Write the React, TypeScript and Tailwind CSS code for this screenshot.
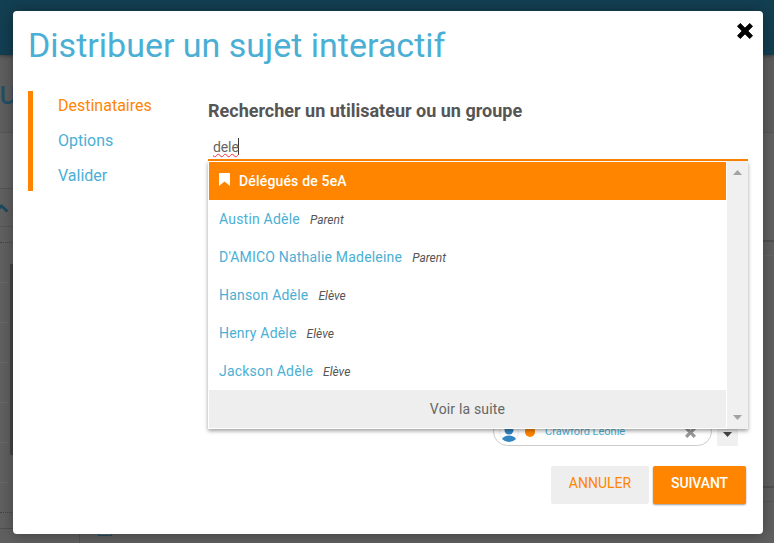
const people = [
  { name: 'Austin Adèle', role: 'Parent' },
  { name: "D'AMICO Nathalie Madeleine", role: 'Parent' },
  { name: 'Hanson Adèle', role: 'Elève' },
  { name: 'Henry Adèle', role: 'Elève' },
  { name: 'Jackson Adèle', role: 'Elève' },
];

const CROSS =
  'M3 0 L8 5 L13 0 L16 3 L11 8 L16 13 L13 16 L8 11 L3 16 L0 13 L5 8 L0 3 Z';

function Cross({ className }: { className: string }) {
  return (
    <svg viewBox="-0.5 -0.5 17 17" className={className} fill="currentColor" stroke="currentColor" strokeLinejoin="round">
      <path d={CROSS} />
    </svg>
  );
}

function Backdrop() {
  return (
    <div className="flex h-full flex-col bg-[#606060]">
      <div className="z-10 h-[55px] shrink-0 bg-[#133f52] shadow-[0_1px_4px_rgba(0,0,0,0.4)]" />
      <div className="flex h-[78px] shrink-0 border-b border-[#575757] bg-[#5e5e5e] pt-[15px]">
        <span className="-ml-[1px] text-[34px] leading-[44px] text-[#205068]">u</span>
      </div>
      <div className="flex min-h-0 flex-1 justify-between">
        <div className="flex w-[80px] flex-col">
          <div className="h-[56px] border-b border-[#555] bg-[#626262]" />
          <div className="h-[38px] border-b border-[#555] pt-[13px]">
            <svg className="h-[13px] w-[10px]" viewBox="0 0 10 13" fill="none" stroke="#1c4a5e" strokeWidth="3">
              <path d="M-4 9 L1.5 4 L7.5 9.5" />
            </svg>
          </div>
          <div className="h-[16px] border-b border-dotted border-[#444]" />
          <div className="flex h-[270px] border-b border-dotted border-[#444]">
            <div className="w-2">
              {[0, 1, 2, 3, 4, 5].map((i) => (
                <div key={i} className="h-10 border-b border-[#686868]" />
              ))}
            </div>
            <div className="mt-[21px] ml-[2px] h-[191px] w-1 bg-[#454545]" />
          </div>
          <div className="h-[16px] border-b border-[#505050]" />
          <div className="flex-1 border-r border-[#545454]" />
        </div>
        <div className="flex flex-1 items-end pl-[18px]">
          <div className="mb-[7px] h-[14px] w-[14px] border border-[#204e65]" />
        </div>
        <div className="w-[20px]">
          <div className="h-[109px] border-b-2 border-[#505050] bg-[#626262]" />
          <div className="h-[14px] border-b border-[#666]" />
          <div className="h-[232px] border-b-2 border-[#505050]" />
          <div className="h-[14px] border-b border-[#585858]" />
        </div>
      </div>
    </div>
  );
}

function Scrollbar() {
  return (
    <div className="ml-px flex w-[21px] flex-col items-center justify-between bg-[#f0f0f0] pt-[9px] pb-[9px]">
      <svg className="h-[5px] w-[9px]" viewBox="0 0 9 5" fill="#a3a3a3"><path d="M4.5 0 L9 5 H0 Z" /></svg>
      <svg className="h-[5px] w-[9px]" viewBox="0 0 9 5" fill="#a3a3a3"><path d="M0 0 H9 L4.5 5 Z" /></svg>
    </div>
  );
}

function Suggestions() {
  return (
    <div className="absolute top-[28px] left-0 z-10 flex h-[268px] w-[540px] bg-white pl-px shadow-[0_2px_4px_rgba(0,0,0,0.38)]">
      <div className="flex-1 pt-px">
        <div className="flex h-[38px] items-center bg-[#ff8500] pl-[10px] text-[14px] font-medium tracking-[0.17px] text-white">
          <svg className="mr-[9px] mb-[3px] h-[13px] w-[11px]" viewBox="0 0 11 13" fill="#fff">
            <path d="M1 0 H10 Q11 0 11 1 V13 L5.5 8.500 L0 13 V1 Q0 0 1 0 Z" />
          </svg>
          Délégués de 5eA
        </div>
        {people.map((p) => (
          <div key={p.name} className="flex h-[38px] items-center gap-[10px] pl-[10px]">
            <span className="text-[14px] tracking-[0.2px] text-[#4bafd5]">{p.name}</span>
            <span className="pt-px text-[12px] text-[#555] italic">{p.role}</span>
          </div>
        ))}
        <div className="flex h-[38px] items-center justify-center bg-[#eee] text-[14px] tracking-[0.17px] text-[#666]">Voir la suite</div>
      </div>
      <Scrollbar />
    </div>
  );
}

function SelectedUser() {
  return (
    <div className="mt-[256px] flex h-[29px] pl-[285px]">
      <div className="flex w-[219px] items-center rounded-full border border-[#ccc] pl-[5px]">
        <div className="flex h-[20px] w-[20px] shrink-0 items-center justify-center rounded-full border border-[#eee]">
          <svg className="mt-[2px] h-[18px] w-[16px] shrink-0" viewBox="0 0 16 18" fill="#3285c3">
            <circle cx="8" cy="6" r="4.5" />
            <path d="M1 15 Q3 11.500 8 11.500 Q13 11.500 15 15 Q12 18 8 18 Q4 18 1 15 Z" />
          </svg>
        </div>
        <div className="ml-[6px] h-[11px] w-[10px] rounded-full bg-[#ff8500]" />
        <span className="ml-[10px] text-[11px] leading-none text-[#4bafd5]">Crawford Leonie</span>
        <Cross className="mt-px mr-[15px] ml-auto h-[11px] w-[11px] text-[#999]" />
      </div>
      <div className="ml-[5px] flex w-[21px] items-center justify-center bg-[#f0f0f0] pt-[5px]">
        <svg className="h-[5px] w-[9px]" viewBox="0 0 9 5" fill="#444"><path d="M0 0 H9 L4.5 5 Z" /></svg>
      </div>
    </div>
  );
}

export default function App() {
  return (
    <div className="relative h-[543px] w-[774px] overflow-hidden font-[Roboto,sans-serif]">
      <Backdrop />
      <div className="absolute top-[11px] left-[13px] z-20 flex h-[523px] w-[750px] flex-col rounded-[4px] bg-white shadow-[0_1px_14px_rgba(0,0,0,0.35)]">
        <div className="flex h-[80px] justify-between pr-[10px] pl-[15px]">
          <h1 className="pt-[13px] text-[34px] leading-[42px] text-[#4bafd5]">Distribuer un sujet interactif</h1>
          <Cross className="mt-[12px] h-[16px] w-[16px] text-black" />
        </div>
        <div className="flex h-[375px] pl-[15px]">
          <nav className="flex h-[100px] w-[180px] flex-col border-l-[5px] border-[#ff8500] pl-[25px] text-[16px] leading-[30px] text-[#4bafd5]">
            <a className="h-[35px] text-[#ff8500]">Destinataires</a>
            <a className="h-[35px]">Options</a>
            <a className="h-[30px]">Valider</a>
          </nav>
          <section className="w-[540px] pt-[8px]">
            <h2 className="h-[34px] text-[18px] leading-[24px] font-bold text-[#555]">Rechercher un utilisateur ou un groupe</h2>
            <div className="relative flex h-[28px] items-start border-b-2 border-[#ff8500] pt-[5px] pl-[5px]">
              <span className="h-[17px] w-[26px] border-r border-[#333] text-[14px] leading-[18px] tracking-[-0.1px] text-[#666] underline decoration-red-500 decoration-wavy decoration-[0.8px] underline-offset-[1px]">dele</span>
              <Suggestions />
            </div>
            <SelectedUser />
          </section>
        </div>
        <div className="flex h-[38px] justify-end gap-1 pr-[17px] text-[14px] leading-[34px]">
          <button className="w-[98px] rounded-[2px] bg-[#eee] pb-1 text-[#ff8500]">ANNULER</button>
          <button className="w-[93px] rounded-[2px] bg-[#ff8500] pb-1 font-medium tracking-[-0.1px] text-white shadow-[0_1px_2px_rgba(0,0,0,0.4)]">SUIVANT</button>
        </div>
      </div>
    </div>
  );
}
